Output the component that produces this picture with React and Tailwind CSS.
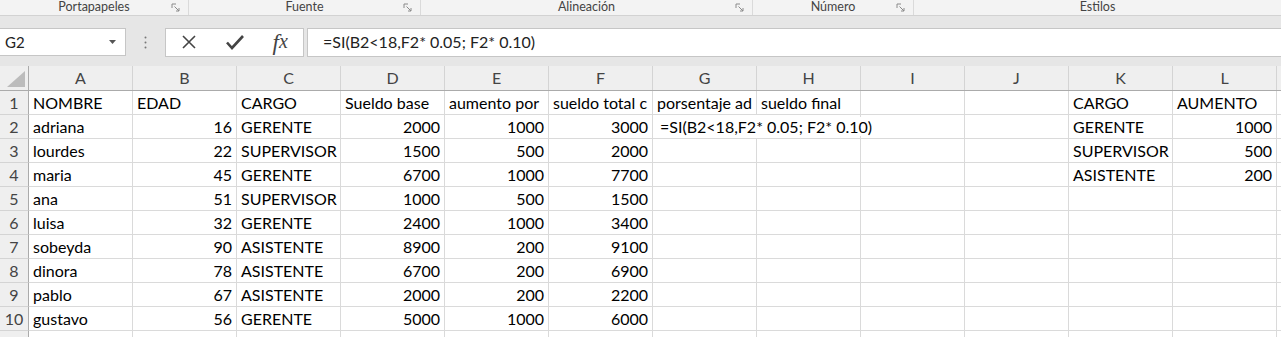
import React from 'react';

const COLS = ['A', 'B', 'C', 'D', 'E', 'F', 'G', 'H', 'I', 'J', 'K', 'L'];

// los valores numericos se alinean a la derecha
const filas = [
  ['NOMBRE', 'EDAD', 'CARGO', 'Sueldo base', 'aumento por', 'sueldo total c', 'porsentaje ad', 'sueldo final', '', '', 'CARGO', 'AUMENTO'],
  ['adriana', 16, 'GERENTE', 2000, 1000, 3000, '=SI(B2<18,F2* 0.05; F2* 0.10)', '', '', '', 'GERENTE', 1000],
  ['lourdes', 22, 'SUPERVISOR', 1500, 500, 2000, '', '', '', '', 'SUPERVISOR', 500],
  ['maria', 45, 'GERENTE', 6700, 1000, 7700, '', '', '', '', 'ASISTENTE', 200],
  ['ana', 51, 'SUPERVISOR', 1000, 500, 1500, '', '', '', '', '', ''],
  ['luisa', 32, 'GERENTE', 2400, 1000, 3400, '', '', '', '', '', ''],
  ['sobeyda', 90, 'ASISTENTE', 8900, 200, 9100, '', '', '', '', '', ''],
  ['dinora', 78, 'ASISTENTE', 6700, 200, 6900, '', '', '', '', '', ''],
  ['pablo', 67, 'ASISTENTE', 2000, 200, 2200, '', '', '', '', '', ''],
  ['gustavo', 56, 'GERENTE', 5000, 1000, 6000, '', '', '', '', '', ''],
  ['', '', '', '', '', '', '', '', '', '', '', ''],
];

const grupos = [
  { nombre: 'Portapapeles', ancho: 'w-[189px]' },
  { nombre: 'Fuente', ancho: 'w-[232px]' },
  { nombre: 'Alineación', ancho: 'w-[332px]' },
  { nombre: 'Número', ancho: 'w-[161px]' },
  { nombre: 'Estilos', ancho: 'flex-1', sinLanzador: true },
];

function Lanzador() {
  return (
    <svg width="9" height="9" viewBox="0 0 9 9" className="absolute right-[8px] top-[3px]">
      <path d="M1 1h4M1 1v4" stroke="#8a8a8a" strokeWidth="1" fill="none" />
      <path d="M3.5 3.5L8 8M8 5v3H5" stroke="#8a8a8a" strokeWidth="1" fill="none" />
    </svg>
  );
}

function Cinta() {
  return (
    <div className="flex h-[16px] bg-[#f3f3f3] border-b border-[#d2d2d2] text-[12.5px] leading-[14px] text-[#444]">
      {grupos.map((g) => (
        <div key={g.nombre} className={`${g.ancho} relative shrink-0 flex justify-center ${g.sinLanzador ? '' : 'border-r border-[#dadada]'}`}>
          <span>{g.nombre}</span>
          {!g.sinLanzador && <Lanzador />}
        </div>
      ))}
    </div>
  );
}

function BarraFormulas() {
  return (
    <div className="flex items-center h-[28px] mt-[12px]">
      {/* Cuadro de nombres */}
      <div className="w-[126px] h-[28px] bg-white border border-[#c6c6c6] border-l-0 flex items-center justify-between pl-[5px] pr-[9px] text-[15px] text-[#222]">
        <span>G2</span>
        <svg width="7" height="4" viewBox="0 0 7 4"><path d="M0 0h7L3.5 4z" fill="#555" /></svg>
      </div>
      <div className="w-[39px] flex justify-center">
        <svg width="3" height="13" viewBox="0 0 3 13">
          <circle cx="1.5" cy="1.5" r="1" fill="#777" />
          <circle cx="1.5" cy="6.5" r="1" fill="#777" />
          <circle cx="1.5" cy="11.5" r="1" fill="#777" />
        </svg>
      </div>
      <div className="w-[139px] h-[29px] bg-white border border-[#c6c6c6] flex items-center">
        <div className="w-[46px] flex justify-center">
          <svg width="16" height="16" viewBox="0 0 16 16"><path d="M2 2l12 12M14 2L2 14" stroke="#444" strokeWidth="1.6" /></svg>
        </div>
        <div className="w-[46px] flex justify-center">
          <svg width="20" height="16" viewBox="0 0 20 16"><path d="M2 8.5l5 5.5L18 2" stroke="#444" strokeWidth="2.6" fill="none" /></svg>
        </div>
        <div className="w-[46px] flex justify-center font-['Liberation_Serif',serif] italic text-[23px] text-[#444] leading-none">
          <span>f</span><span className="text-[20px]">x</span>
        </div>
      </div>
      <div className="flex-1 h-[29px] ml-[3px] bg-white border border-[#c6c6c6] border-r-0 flex items-center pl-[15px] text-[16px] text-[#222]">
        =SI(B2&lt;18,F2* 0.05; F2* 0.10)
      </div>
    </div>
  );
}

function Encabezados() {
  return (
    <div className="flex h-[25px] mt-[10px] bg-[#efefef] border-b border-[#ababab] text-[16px] text-[#444]">
      <div className="w-[29px] shrink-0 border-r border-[#ababab] relative">
        <svg width="18" height="16" viewBox="0 0 18 16" className="absolute right-[3px] bottom-[3px]">
          <path d="M18 0V16H0z" fill="#bcbcbc" />
        </svg>
      </div>
      {COLS.map((c) => (
        <div key={c} className="w-[104px] shrink-0 border-r border-[#d4d4d4] flex items-center justify-center">
          {c}
        </div>
      ))}
      <div className="flex-1" />
    </div>
  );
}

function Celda({ valor, col, fila }) {
  const esNumero = typeof valor === 'number';
  const desborda = col === 6 && fila === 1;
  return (
    <div
      className={`w-[104px] shrink-0 h-[24px] border-b border-[#dadada] leading-[24px] whitespace-nowrap ${
        desborda ? 'relative z-10 overflow-visible border-r-0 pl-[7px]' : 'overflow-hidden border-r px-[4px]'
      } ${esNumero ? 'text-right' : 'text-left'}`}
    >
      {desborda ? <span className="bg-white pr-[2px]">{valor}</span> : valor}
    </div>
  );
}

export default function App() {
  return (
    <div className="w-[1281px] h-[337px] overflow-hidden bg-[#e6e6e6] font-['Lato','Liberation_Sans',sans-serif]">
      <Cinta />
      <BarraFormulas />
      <Encabezados />
      <div className="bg-white text-[16px] text-black">
        {filas.map((fila, i) => (
          <div key={i} className="flex">
            <div className="w-[29px] shrink-0 h-[24px] bg-[#efefef] border-r border-[#ababab] border-b border-b-[#d4d4d4] text-[#444] text-center leading-[24px]">
              {i < 10 ? i + 1 : ''}
            </div>
            {fila.map((v, j) => (
              <Celda key={j} valor={v} col={j} fila={i} />
            ))}
            <div className="flex-1 h-[24px] border-b border-[#dadada]" />
          </div>
        ))}
      </div>
    </div>
  );
}
